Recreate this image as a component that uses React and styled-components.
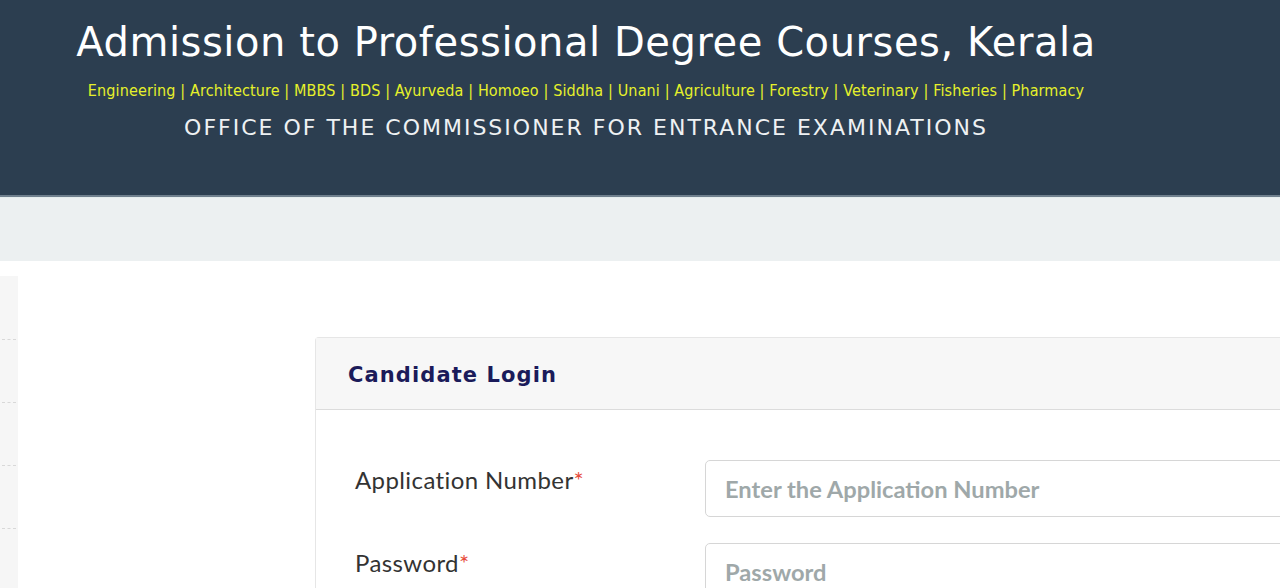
import React from "react";
import styled, { createGlobalStyle } from "styled-components";

const GlobalStyle = createGlobalStyle`
  html, body {
    margin: 0;
    padding: 0;
    background: #fff;
    overflow: hidden;
  }
  * {
    box-sizing: border-box;
  }
`;

const courses = [
  "Engineering",
  "Architecture",
  "MBBS",
  "BDS",
  "Ayurveda",
  "Homoeo",
  "Siddha",
  "Unani",
  "Agriculture",
  "Forestry",
  "Veterinary",
  "Fisheries",
  "Pharmacy",
];

const sideItems = [0, 1, 2, 3, 4];

const App = () => {
  return (
    <Page>
      <GlobalStyle />
      <Header>
        <HeaderInner>
          <Title>Admission to Professional Degree Courses, Kerala</Title>
          <Courses>{courses.join(" | ")}</Courses>
          <Office>OFFICE OF THE COMMISSIONER FOR ENTRANCE EXAMINATIONS</Office>
        </HeaderInner>
      </Header>
      <Band />
      <Main>
        <Sidebar>
          {sideItems.map((i) => (
            <SideItem key={i} />
          ))}
        </Sidebar>
        <Card>
          <CardHeader>
            <CardTitle>Candidate Login</CardTitle>
          </CardHeader>
          <CardBody>
            <FormRow>
              <Label>
                Application Number<Req>*</Req>
              </Label>
              <Input type="text" placeholder="Enter the Application Number" />
            </FormRow>
            <FormRow>
              <Label>
                Password<Req>*</Req>
              </Label>
              <Input type="password" placeholder="Password" />
            </FormRow>
          </CardBody>
        </Card>
      </Main>
    </Page>
  );
};

export default App;

const Page = styled.div`
  width: 1280px;
  height: 588px;
  overflow: hidden;
`;

const Header = styled.header`
  background: #2c3e50;
  height: 197px;
  border-bottom: 2px solid #6f7f8d;
`;

const HeaderInner = styled.div`
  width: 1172px;
  padding-top: 17px;
  text-align: center;
`;

const Title = styled.h1`
  margin: 0;
  font-family: "DejaVu Sans", Verdana, sans-serif;
  font-weight: normal;
  font-size: 40px;
  letter-spacing: 0.55px;
  color: #fff;
  line-height: 50px;
`;

const Courses = styled.div`
  margin-top: 14px;
  font-family: "DejaVu Sans Condensed", "DejaVu Sans", sans-serif;
  font-size: 16px;
  letter-spacing: 0.13px;
  color: #e6f12a;
  line-height: 20px;
`;

const Office = styled.div`
  margin-top: 13px;
  font-family: "DejaVu Sans", Verdana, sans-serif;
  font-size: 22px;
  letter-spacing: 2px;
  color: #eef1f3;
  line-height: 28px;
`;

const Band = styled.div`
  height: 64px;
  background: #ecf0f1;
  border-top: 1px solid #e4ecec;
`;

const Main = styled.main`
  display: flex;
  align-items: flex-start;
  background: #fff;
`;

const Sidebar = styled.aside`
  width: 18px;
  flex-shrink: 0;
  margin-top: 15px;
  height: 400px;
  background: #f6f6f6;
  padding-top: 63px;
`;

const SideItem = styled.div`
  height: 63px;
  border-top: 1px dashed #d8d8d8;
  margin: 0 2px;
`;

const Card = styled.section`
  margin-left: 297px;
  margin-top: 76px;
  width: 1000px;
  flex-shrink: 0;
  border: 1px solid #e6e6e6;
  border-right: none;
  border-radius: 4px 0 0 0;
  background: #fff;
`;

const CardHeader = styled.div`
  height: 72px;
  background: #f7f7f7;
  border-bottom: 1px solid #dcdcdc;
  display: flex;
  align-items: center;
  padding-left: 32px;
  padding-top: 3px;
`;

const CardTitle = styled.h2`
  margin: 0;
  font-family: "DejaVu Sans", Verdana, sans-serif;
  font-weight: 700;
  font-size: 21px;
  letter-spacing: 1.1px;
  color: #1b1b5a;
`;

const CardBody = styled.div`
  padding: 50px 0 0 39px;
  display: flex;
  flex-direction: column;
  gap: 26px;
`;

const FormRow = styled.div`
  display: flex;
  align-items: flex-start;
`;

const Label = styled.label`
  width: 350px;
  flex-shrink: 0;
  font-family: Lato, "Open Sans", sans-serif;
  font-size: 24px;
  letter-spacing: 0.4px;
  color: #333;
  line-height: 40px;
`;

const Req = styled.span`
  color: #e74c3c;
`;

const Input = styled.input`
  width: 600px;
  height: 57px;
  border: 1px solid #d6d6d6;
  border-radius: 5px;
  padding: 0 19px;
  font-family: Lato, "Open Sans", sans-serif;
  font-size: 23.7px;
  color: #333;
  background: #fff;
  outline: none;

  &::placeholder {
    color: #8f9a9b;
    font-weight: 700;
    opacity: 0.85;
  }
`;
